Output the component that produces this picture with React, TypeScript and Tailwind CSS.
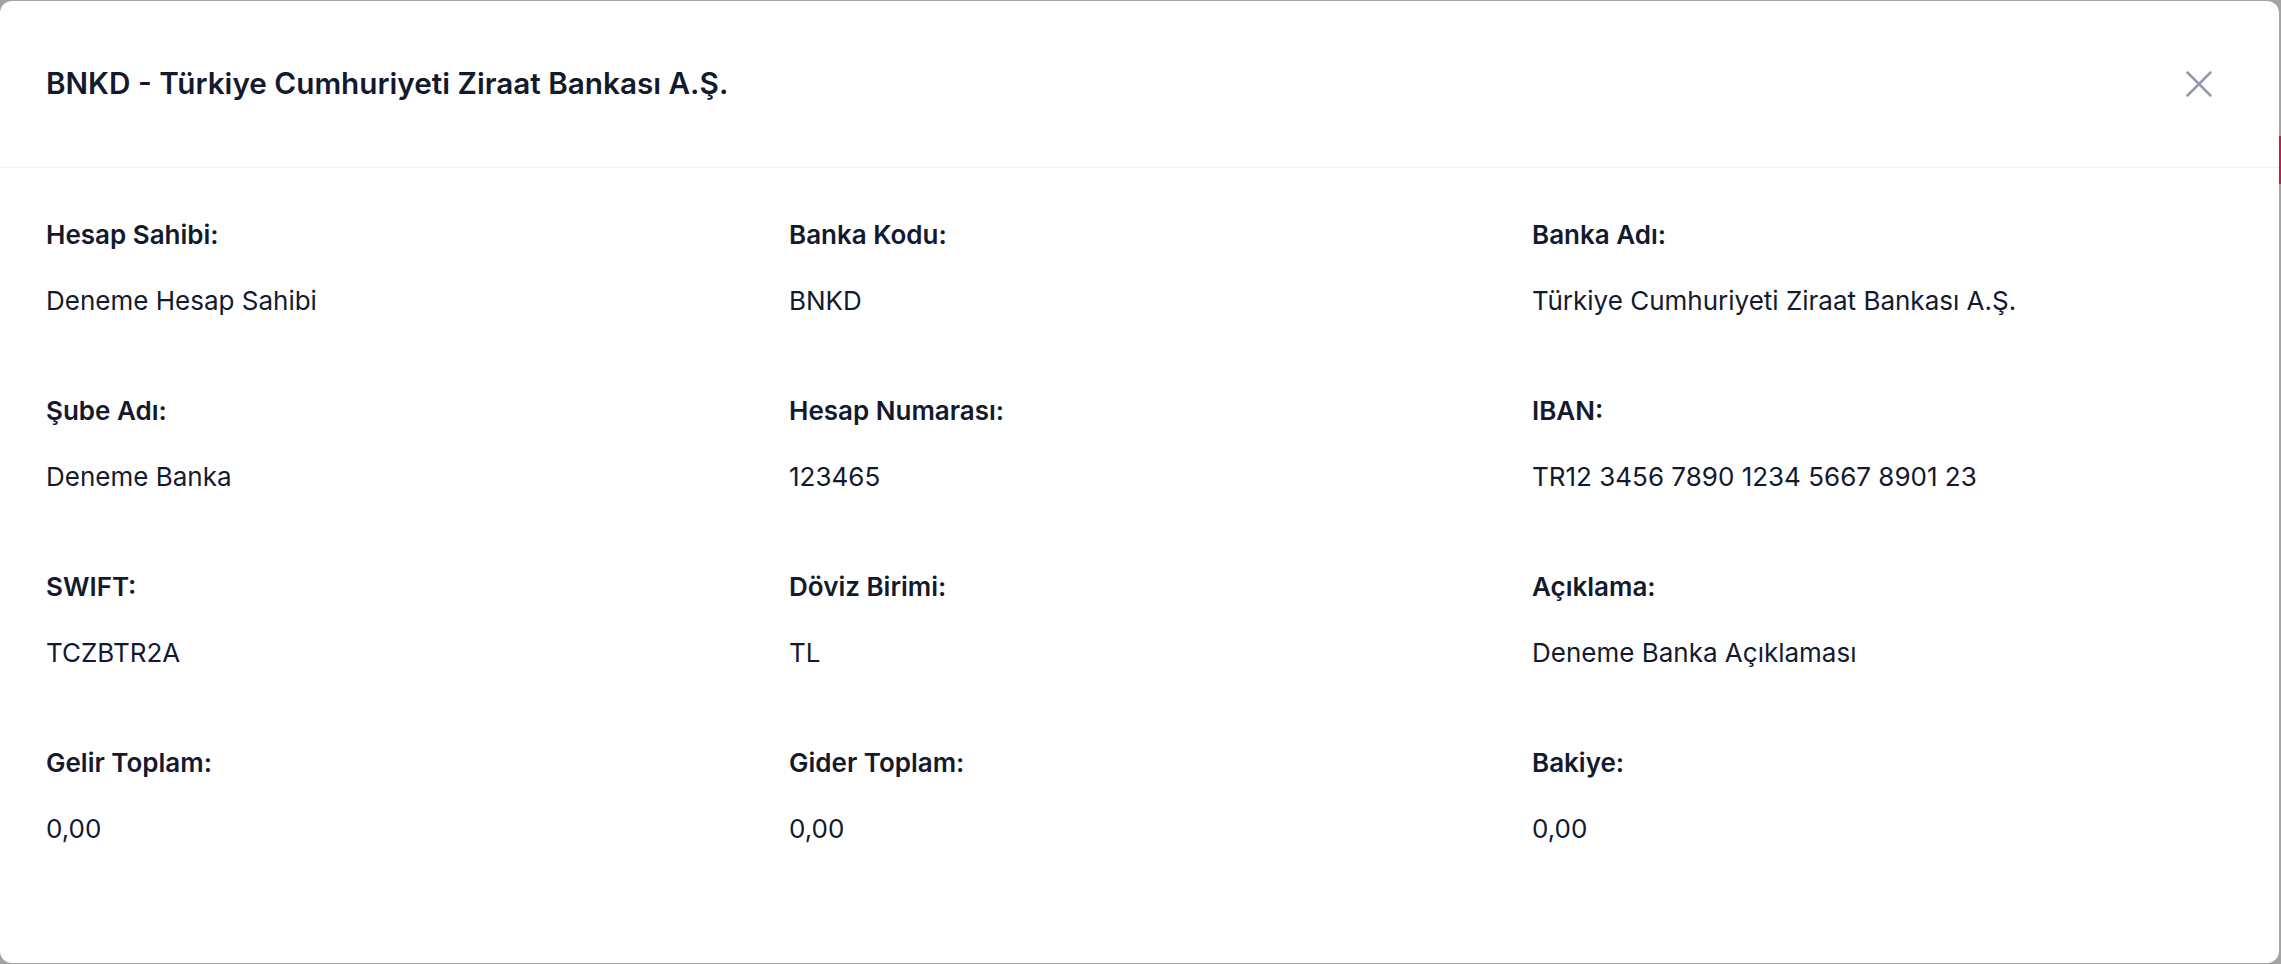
import { X } from "lucide-react";

const fields: { label: string; value: string }[] = [
  { label: "Hesap Sahibi:", value: "Deneme Hesap Sahibi" },
  { label: "Banka Kodu:", value: "BNKD" },
  { label: "Banka Adı:", value: "Türkiye Cumhuriyeti Ziraat Bankası A.Ş." },
  { label: "Şube Adı:", value: "Deneme Banka" },
  { label: "Hesap Numarası:", value: "123465" },
  { label: "IBAN:", value: "TR12 3456 7890 1234 5667 8901 23" },
  { label: "SWIFT:", value: "TCZBTR2A" },
  { label: "Döviz Birimi:", value: "TL" },
  { label: "Açıklama:", value: "Deneme Banka Açıklaması" },
  { label: "Gelir Toplam:", value: "0,00" },
  { label: "Gider Toplam:", value: "0,00" },
  { label: "Bakiye:", value: "0,00" },
];

export default function App() {
  return (
    <div
      className="flex h-[964px] w-full bg-[#a3a3a3] py-px"
      style={{ fontFamily: "Inter, 'Noto Sans', sans-serif" }}
    >
      <div className="flex-1 rounded-[12px] bg-white text-[#141a2e]">
        {/* Header */}
        <div className="flex h-[167px] items-center justify-between border-b border-[#f1f1f3] pl-[46px] pr-[57px]">
          <h2 className="text-[29.7px] font-semibold leading-none">
            BNKD - Türkiye Cumhuriyeti Ziraat Bankası A.Ş.
          </h2>
          <button className="text-[#9699ad]">
            <X size={46} strokeWidth={1.3} />
          </button>
        </div>

        {/* Body */}
        <div className="grid grid-cols-[743px_743px_1fr] gap-y-[74px] pl-[46px] pt-[49px]">
          {fields.map((f) => (
            <div key={f.label} className="flex flex-col gap-[30px]">
              <div className="text-[26px] font-semibold leading-[36px]">{f.label}</div>
              <div className="text-[26px] leading-[36px]">{f.value}</div>
            </div>
          ))}
        </div>
      </div>
      <div className="w-[2px] shrink-0">
        <div className="mt-[135px] h-[48px] w-full bg-[#be1e4b]" />
      </div>
    </div>
  );
}
